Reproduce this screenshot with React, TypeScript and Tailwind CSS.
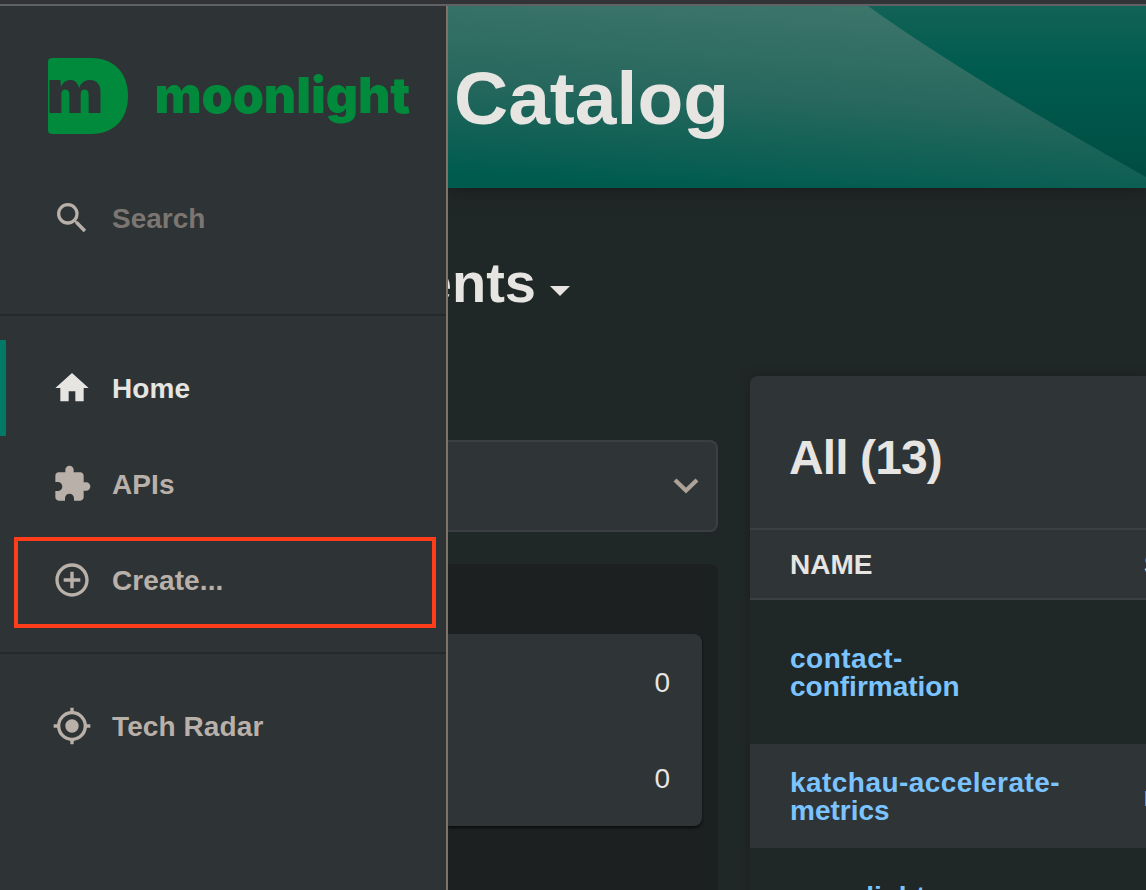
import type { ReactNode } from "react";
import {
  MdAddCircleOutline,
  MdArrowDropDown,
  MdExtension,
  MdHome,
  MdMyLocation,
  MdSearch,
} from "react-icons/md";

function Logo() {
  return (
    <div className="flex h-[76px] items-center pl-12 text-[#028a3c]">
      <svg width="80" height="76" viewBox="0 0 80 76" className="shrink-0">
        <path
          d="M4 0H43C66 0 80 15 80 38S66 76 43 76H4Q0 76 0 72V4Q0 0 4 0Z"
          fill="currentColor"
        />
        <text
          x="-1.5"
          y="55"
          fontFamily="Inter, sans-serif"
          fontWeight="900"
          fontSize="60.5"
          textLength="57"
          lengthAdjust="spacingAndGlyphs"
          fill="#2e3335"
        >
          m
        </text>
      </svg>
      <span className="ml-[26.5px] pb-[2px] font-['Inter',sans-serif] text-[50px] leading-none font-black tracking-[-0.1px]">
        moonlight
      </span>
    </div>
  );
}

function NavItem({
  icon,
  label,
  active = false,
}: {
  icon: ReactNode;
  label: string;
  active?: boolean;
}) {
  return (
    <a
      className={
        active
          ? "flex h-24 items-center border-l-[6px] border-[#007a67] pl-[46px] text-[#e7e5e1]"
          : "flex h-24 items-center pl-[52px] text-[#b9b1a9]"
      }
    >
      <span className="text-[40px]">{icon}</span>
      <span className="ml-5 pt-0.5 text-[28px] leading-none font-bold tracking-[0.1px]">
        {label}
      </span>
    </a>
  );
}

function Sidebar() {
  return (
    <aside className="relative flex w-[448px] shrink-0 flex-col border-r-2 border-[#7d7368] bg-[#2e3335] pt-[52px]">
      <Logo />
      <div className="mt-9 flex h-24 items-center pl-[52px]">
        <MdSearch size={40} className="text-[#b9b1a9]" />
        <span className="ml-5 pt-0.5 text-[28px] leading-none font-bold text-[#7b7671]">
          Search
        </span>
      </div>
      <div className="mt-12 h-0.5 bg-[#25292a]" />
      <nav className="mt-6">
        <NavItem icon={<MdHome />} label="Home" active />
        <NavItem icon={<MdExtension />} label="APIs" />
        <NavItem icon={<MdAddCircleOutline />} label="Create..." />
      </nav>
      <div className="mt-6 h-0.5 bg-[#25292a]" />
      <nav className="mt-6">
        <NavItem icon={<MdMyLocation />} label="Tech Radar" />
      </nav>
      <div className="absolute top-[531px] left-[14px] h-[91px] w-[422px] border-4 border-[#ff3d1b]" />
    </aside>
  );
}

function HeaderBackdrop() {
  return (
    <svg
      className="absolute inset-0"
      width="698"
      height="182"
      viewBox="0 0 698 182"
      preserveAspectRatio="none"
    >
      <defs>
        <linearGradient id="wave" gradientUnits="userSpaceOnUse" x1="330" y1="-8" x2="318" y2="186">
          <stop offset="0" stopColor="#3d756b" />
          <stop offset="0.5" stopColor="#28685e" />
          <stop offset="1" stopColor="#005b4f" />
        </linearGradient>
        <linearGradient id="deep" gradientUnits="userSpaceOnUse" x1="600" y1="0" x2="600" y2="182">
          <stop offset="0" stopColor="#126256" />
          <stop offset="0.35" stopColor="#005b4f" />
          <stop offset="1" stopColor="#004c41" />
        </linearGradient>
      </defs>
      <rect width="698" height="182" fill="url(#deep)" />
      <path d="M0 0H420Q516 69 698 171V182H0Z" fill="url(#wave)" />
    </svg>
  );
}

function FilterColumn() {
  return (
    <section className="flex w-[270px] flex-col">
      <div className="flex h-[92px] items-center justify-end rounded-r-lg border-2 border-l-0 border-[#3a3f42] bg-[#2f3437] pr-[17px]">
        <svg width="26" height="18" viewBox="0 0 26 18">
          <path d="M2 3L13 13.5L24 3" fill="none" stroke="#ada297" strokeWidth="4.2" />
        </svg>
      </div>
      <div className="mt-8 flex-1 rounded-tr-lg bg-[#1d2020] pt-[70px] pr-4">
        <div className="rounded-r-lg bg-[#2f3437] text-[28px] leading-none text-[#e7e5e1] shadow-[0_2px_3px_rgba(0,0,0,0.6)]">
          <div className="flex h-24 items-center justify-end pt-0.5 pr-8">0</div>
          <div className="flex h-24 items-center justify-end pt-0.5 pr-8">0</div>
        </div>
      </div>
    </section>
  );
}

function CatalogTable() {
  return (
    <section className="flex w-[396px] shrink-0 flex-col rounded-tl-lg bg-[#202827] shadow-[0_0_8px_2px_rgba(30,30,33,0.8)]">
      <h2 className="flex h-[152px] shrink-0 items-center rounded-tl-lg bg-[#2f3437] pt-[11px] pl-[39px] text-[48px] leading-none font-bold tracking-[-0.9px] text-[#e7e5e1]">
        All (13)
      </h2>
      <div className="flex h-[72px] shrink-0 items-center overflow-hidden border-y-2 border-[#3b4043] bg-[#2f3437] pt-0.5 pl-10 text-[28px] leading-none font-bold whitespace-nowrap text-[#e7e5e1]">
        <span className="w-[354px] shrink-0">NAME</span>
        <span>SYSTEM</span>
      </div>
      <div className="text-[28px] leading-7 font-bold text-[#7bc4ff]">
        <div className="flex h-36 items-center pt-0.5 pl-10">
          <a>
            <span className="tracking-[0.5px]">contact-</span>
            <br />
            confirmation
          </a>
        </div>
        <div className="flex h-[104px] items-center overflow-hidden bg-[#2f3437] pt-0.5 pl-10">
          <a className="w-[353.5px] shrink-0">
            <span className="tracking-[0.45px]">katchau-accelerate-</span>
            <br />
            metrics
          </a>
          <a>moonlight</a>
        </div>
        <div className="flex h-[104px] pt-[35px] pl-10">
          <a>moonlight</a>
        </div>
      </div>
    </section>
  );
}

export default function App() {
  return (
    <div className="flex h-[890px] w-[1146px] flex-col overflow-hidden bg-[#202827] font-['Liberation_Sans',Arial,sans-serif]">
      <div className="h-1.5 shrink-0 border-b-2 border-[#606165] bg-[#313337]" />
      <div className="flex min-h-0 flex-1">
        <Sidebar />
        <main className="flex w-[698px] flex-col overflow-hidden">
          <header className="relative flex h-[182px] shrink-0 items-center shadow-[0_4px_16px_#1c1c1e]">
            <HeaderBackdrop />
            <h1 className="relative ml-1.5 pt-[3px] text-[75px] leading-none font-bold text-[#e7e5e1]">
              Catalog
            </h1>
          </header>
          <div className="mt-[66px] flex h-[72px] shrink-0 items-center text-[#e7e5e1]">
            <div className="flex w-[88px] justify-end overflow-hidden pb-3.5 text-[56px] leading-[58px] font-bold">
              <span>Components</span>
            </div>
            <MdArrowDropDown size={48} />
          </div>
          <div className="mt-[50px] flex h-[514px] shrink-0 gap-8">
            <div className="flex pt-16">
              <FilterColumn />
            </div>
            <CatalogTable />
          </div>
        </main>
      </div>
    </div>
  );
}
